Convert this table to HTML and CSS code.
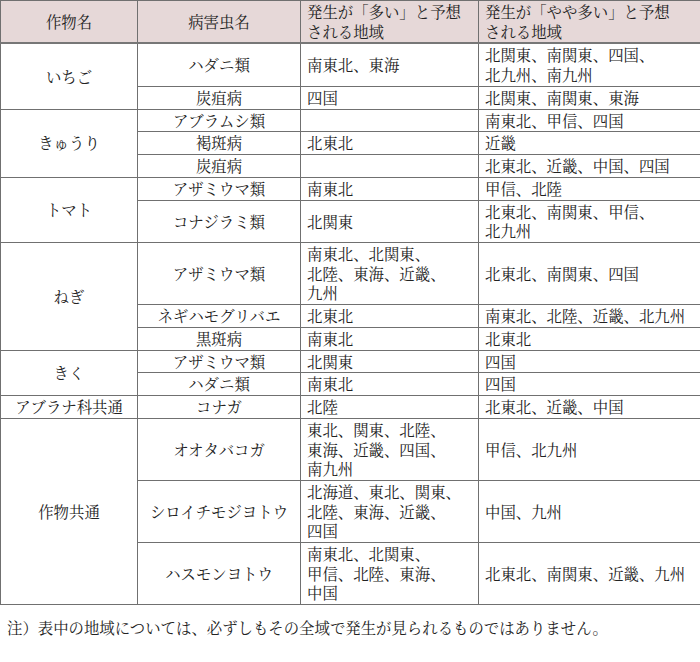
FILE: index.html
```html
<!DOCTYPE html>
<html lang="ja">
<head>
<meta charset="utf-8">
<title>病害虫発生予想</title>
<link rel="stylesheet" href="styles.css">
</head>
<body>
<table class="pest-table">
  <colgroup>
    <col class="c1"><col class="c2"><col class="c3"><col class="c4">
  </colgroup>
  <thead>
    <tr>
      <th class="center">作物名</th>
      <th class="center">病害虫名</th>
      <th class="left">発生が「多い」と予想<br>される地域</th>
      <th class="left">発生が「やや多い」と予想<br>される地域</th>
    </tr>
  </thead>
  <tbody>
    <tr>
      <td class="crop" rowspan="2">いちご</td>
      <td class="pest">ハダニ類</td>
      <td>南東北、東海</td>
      <td>北関東、南関東、四国、<br>北九州、南九州</td>
    </tr>
    <tr>
      <td class="pest">炭疽病</td>
      <td>四国</td>
      <td>北関東、南関東、東海</td>
    </tr>
    <tr>
      <td class="crop" rowspan="3">きゅうり</td>
      <td class="pest">アブラムシ類</td>
      <td></td>
      <td>南東北、甲信、四国</td>
    </tr>
    <tr>
      <td class="pest">褐斑病</td>
      <td>北東北</td>
      <td>近畿</td>
    </tr>
    <tr>
      <td class="pest">炭疽病</td>
      <td></td>
      <td>北東北、近畿、中国、四国</td>
    </tr>
    <tr>
      <td class="crop" rowspan="2">トマト</td>
      <td class="pest">アザミウマ類</td>
      <td>南東北</td>
      <td>甲信、北陸</td>
    </tr>
    <tr>
      <td class="pest">コナジラミ類</td>
      <td>北関東</td>
      <td>北東北、南関東、甲信、<br>北九州</td>
    </tr>
    <tr>
      <td class="crop" rowspan="3">ねぎ</td>
      <td class="pest">アザミウマ類</td>
      <td>南東北、北関東、<br>北陸、東海、近畿、<br>九州</td>
      <td>北東北、南関東、四国</td>
    </tr>
    <tr>
      <td class="pest">ネギハモグリバエ</td>
      <td>北東北</td>
      <td>南東北、北陸、近畿、北九州</td>
    </tr>
    <tr>
      <td class="pest">黒斑病</td>
      <td>南東北</td>
      <td>北東北</td>
    </tr>
    <tr>
      <td class="crop" rowspan="2">きく</td>
      <td class="pest">アザミウマ類</td>
      <td>北関東</td>
      <td>四国</td>
    </tr>
    <tr>
      <td class="pest">ハダニ類</td>
      <td>南東北</td>
      <td>四国</td>
    </tr>
    <tr>
      <td class="crop">アブラナ科共通</td>
      <td class="pest">コナガ</td>
      <td>北陸</td>
      <td>北東北、近畿、中国</td>
    </tr>
    <tr>
      <td class="crop" rowspan="3">作物共通</td>
      <td class="pest">オオタバコガ</td>
      <td>東北、関東、北陸、<br>東海、近畿、四国、<br>南九州</td>
      <td>甲信、北九州</td>
    </tr>
    <tr>
      <td class="pest">シロイチモジヨトウ</td>
      <td>北海道、東北、関東、<br>北陸、東海、近畿、<br>四国</td>
      <td>中国、九州</td>
    </tr>
    <tr>
      <td class="pest">ハスモンヨトウ</td>
      <td>南東北、北関東、<br>甲信、北陸、東海、<br>中国</td>
      <td>北東北、南関東、近畿、九州</td>
    </tr>
  </tbody>
</table>
<p class="note">注）表中の地域については、必ずしもその全域で発生が見られるものではありません。</p>
</body>
</html>
```

FILE: styles.css
```css
html, body {
  margin: 0;
  padding: 0;
  background: #ffffff;
}

body {
  font-family: "Noto Serif CJK JP", "Noto Sans CJK JP", "Liberation Serif", serif;
  font-size: 15.4px;
  color: #222222;
}

.pest-table {
  width: 700px;
  border-collapse: collapse;
  table-layout: fixed;
  border: 1px solid #666666;
}

.c1 { width: 137px; }
.c2 { width: 163px; }
.c3 { width: 178px; }
.c4 { width: 222px; }

.pest-table th,
.pest-table td {
  border: 1px solid #707070;
  padding: 1.1px 6px;
  line-height: 19.6px;
  font-weight: normal;
  vertical-align: middle;
  white-space: nowrap;
}

.pest-table thead th {
  background: #e6d8d8;
  border-bottom: 2px solid #777777;
}

.pest-table th.center {
  text-align: center;
}

.pest-table th.left,
.pest-table td {
  text-align: left;
}

.pest-table td.crop,
.pest-table td.pest {
  padding-left: 2px;
  padding-right: 2px;
  text-align: center;
}

.note {
  margin: 12px 0 0 7px;
  line-height: 20px;
}
```
